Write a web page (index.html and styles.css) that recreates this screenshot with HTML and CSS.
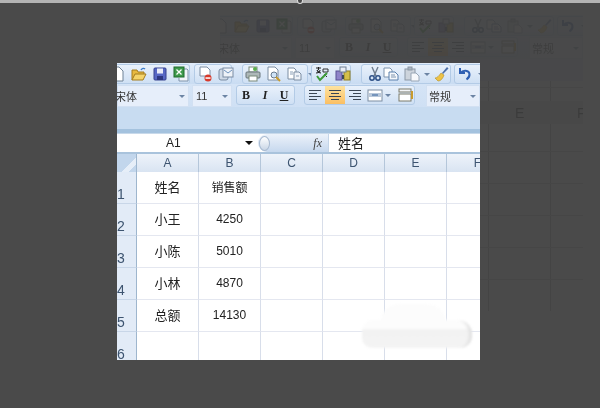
FILE: index.html
```html
<!DOCTYPE html>
<html lang="en">
<head>
    <meta charset="UTF-8">
    <meta name="viewport" content="width=device-width, initial-scale=1.0">
    <title>Sheet</title>
    <link rel="stylesheet" href="styles.css">
</head>
<body>
    <svg class="defs" width="0" height="0">
        <symbol id="i-new" viewBox="0 0 16 16"><path d="M-6 1h14l4 4v10H-6z" fill="#fff" stroke="#6f8296"/></symbol>
        <symbol id="i-open" viewBox="0 0 16 16"><path d="M1 14V4h5l1 2h6v2" fill="#e8b93f" stroke="#a47c1f"/><path d="M1 14l3-6h11l-3 6z" fill="#f5d46a" stroke="#a47c1f"/><path d="M10 4c1-2 3-2 4-1" fill="none" stroke="#3d7cc9" stroke-width="1.4"/></symbol>
        <symbol id="i-save" viewBox="0 0 16 16"><rect x="2" y="2" width="12" height="12" rx="1" fill="#5667c4" stroke="#36428f"/><rect x="5" y="2.500" width="6" height="5" fill="#e9ecf8"/><rect x="5" y="10" width="6" height="4" fill="#2c3780"/></symbol>
        <symbol id="i-xls" viewBox="0 0 16 16"><path d="M8 3h6l1 1v11H6v-3" fill="#f2f5fa" stroke="#7f93ab"/><rect x="1" y="1" width="10" height="10" fill="#3f9a4c" stroke="#1d6b2b"/><path d="M3.500 3.500l5 5m0-5l-5 5" stroke="#fff" stroke-width="1.300"/></symbol>
        <symbol id="i-nosign" viewBox="0 0 16 16"><path d="M3 1h7l3 3v6H3z" fill="#fff" stroke="#7d8ea3"/><circle cx="11" cy="12" r="3.500" fill="#d8392b"/><rect x="8.500" y="11.300" width="5" height="1.500" fill="#fff"/></symbol>
        <symbol id="i-mail" viewBox="0 0 16 16"><rect x="1" y="3" width="9" height="11" rx="2" fill="#cfd9e6" stroke="#7a8ca3"/><rect x="5" y="2" width="10" height="9" fill="#eef2f8" stroke="#7a8ca3"/><path d="M6 4l4 3 4-3" fill="none" stroke="#6f93bd"/></symbol>
        <symbol id="i-print" viewBox="0 0 16 16"><rect x="4" y="1" width="8" height="5" fill="#fff" stroke="#7a8a7a"/><rect x="1" y="6" width="14" height="6" rx="1" fill="#aeb8b8" stroke="#69757a"/><rect x="4" y="10" width="8" height="5" fill="#fff" stroke="#7a8a7a"/><circle cx="10" cy="3" r="2" fill="#5aae4e"/></symbol>
        <symbol id="i-preview" viewBox="0 0 16 16"><path d="M2 1h7l3 3v10H2z" fill="#fff" stroke="#7d8ea3"/><circle cx="8" cy="9" r="3" fill="#cfe3f6" stroke="#66788c"/><path d="M10 11l4 4" stroke="#c79a2d" stroke-width="2"/></symbol>
        <symbol id="i-pages" viewBox="0 0 16 16"><path d="M1 2h6l2 2v9H1z" fill="#fff" stroke="#7d8ea3"/><path d="M7 6h5l2 2v6H7z" fill="#eef2f8" stroke="#7d8ea3"/><path d="M3 6h3M3 8h3M9 10h3" stroke="#8ba0b8"/></symbol>
        <symbol id="i-spell" viewBox="0 0 16 16"><path d="M2 2h5M4.500 1v3M2 7c3 0 4-2 4-3M3 4c1 2 2 3 4 3" fill="none" stroke="#222" stroke-width="1.100"/><path d="M9 3h5v3H9zM10 8l3 3" fill="none" stroke="#333"/><path d="M3 10l3 4 7-7" fill="none" stroke="#3f9c3a" stroke-width="2"/></symbol>
        <symbol id="i-book" viewBox="0 0 16 16"><rect x="1" y="5" width="6" height="9" fill="#8f84c9" stroke="#5b5296"/><rect x="9" y="5" width="6" height="9" fill="#d5c04a" stroke="#8f7f22"/><rect x="5" y="1" width="6" height="5" fill="#e8edf5" stroke="#6f7f93"/><path d="M7 9h2v4H7z" fill="#3f4a5a"/></symbol>
        <symbol id="i-cut" viewBox="0 0 16 16"><path d="M5 1l4 9M11 1L7 10" stroke="#6f7d8e" stroke-width="1.400"/><circle cx="5" cy="12" r="2.200" fill="none" stroke="#2c4f86" stroke-width="1.500"/><circle cx="11" cy="12" r="2.200" fill="none" stroke="#2c4f86" stroke-width="1.500"/></symbol>
        <symbol id="i-copy" viewBox="0 0 16 16"><path d="M1 2h6l2 2v7H1z" fill="#fff" stroke="#7d93ad"/><path d="M6 6h6l3 3v5H6z" fill="#f5f8fc" stroke="#5a80ad"/><path d="M8 9h4M8 11h5" stroke="#7d93ad"/></symbol>
        <symbol id="i-paste" viewBox="0 0 16 16"><rect x="1" y="3" width="10" height="11" fill="#cdd4dc" stroke="#8c98a6"/><rect x="4" y="1" width="4" height="3" fill="#aab4c0" stroke="#8c98a6"/><path d="M7 7h5l3 3v5H7z" fill="#f6f8fb" stroke="#98a6b6"/></symbol>
        <symbol id="i-brush" viewBox="0 0 16 16"><path d="M9 7l5-6 1.500 1.500L10 8z" fill="#4d6fa8"/><path d="M2 12c2 0 4-2 6-5l3 2c-1 3-3 6-6 6z" fill="#eec245" stroke="#b48e22" stroke-width=".6"/></symbol>
        <symbol id="i-undo" viewBox="0 0 16 16"><path d="M3 2v5h5M3.500 7C6 3.500 12 4 12.500 8c.3 2.500-1 4-3 5.500" fill="none" stroke="#2e5fb3" stroke-width="2"/></symbol>
        <symbol id="i-left" viewBox="0 0 16 16"><path d="M2 3.500h12M2 6.500h8M2 9.500h12M2 12.500h8" stroke="#3a4654" stroke-width="1.200"/></symbol>
        <symbol id="i-center" viewBox="0 0 16 16"><path d="M2 3.500h12M4 6.500h8M2 9.500h12M4 12.500h8" stroke="#3a4654" stroke-width="1.200"/></symbol>
        <symbol id="i-right" viewBox="0 0 16 16"><path d="M2 3.500h12M6 6.500h8M2 9.500h12M6 12.500h8" stroke="#3a4654" stroke-width="1.200"/></symbol>
        <symbol id="i-merge" viewBox="0 0 16 16"><rect x="1" y="3" width="14" height="11" fill="#fff" stroke="#7d8ea3"/><rect x="2" y="6" width="12" height="4" fill="#b9c8da"/><path d="M5 8h6" stroke="#33609c"/></symbol>
        <symbol id="i-indent" viewBox="0 0 16 16"><rect x="1" y="2" width="12" height="3" fill="#f2f4f7" stroke="#7a7a6a"/><rect x="1" y="7" width="12" height="7" fill="#fff" stroke="#7a7a6a"/><path d="M14 4v8" stroke="#c79a2d" stroke-width="2"/></symbol>
    </svg>

    <div class="topline"><span class="topdot"></span></div>

    <!-- the dimmed sheet behind the popup -->
    <div class="ghost">
        <div class="bar">
            <div class="tools">
                <div class="group first"><svg class="ico"><use href="#i-new"/></svg><svg class="ico"><use href="#i-open"/></svg><svg class="ico"><use href="#i-save"/></svg><svg class="ico"><use href="#i-xls"/></svg></div>
                <div class="group g2"><svg class="ico"><use href="#i-nosign"/></svg><svg class="ico"><use href="#i-mail"/></svg></div>
                <div class="group g3"><svg class="ico"><use href="#i-print"/></svg><svg class="ico"><use href="#i-preview"/></svg><svg class="ico"><use href="#i-pages"/></svg><i class="arrow"></i></div>
                <div class="group g4"><svg class="ico"><use href="#i-spell"/></svg><svg class="ico"><use href="#i-book"/></svg></div>
                <div class="group g5"><svg class="ico"><use href="#i-cut"/></svg><svg class="ico"><use href="#i-copy"/></svg><svg class="ico"><use href="#i-paste"/></svg><i class="arrow"></i><svg class="ico"><use href="#i-brush"/></svg></div>
                <div class="group g6"><svg class="ico"><use href="#i-undo"/></svg><i class="arrow"></i></div>
            </div>
            <div class="format">
                <div class="combo font"><span>宋体</span><i class="arrow"></i></div>
                <div class="combo size"><span>11</span><i class="arrow"></i></div>
                <div class="group styles"><b class="btn">B</b><b class="btn it">I</b><b class="btn un">U</b></div>
                <div class="group aligns"><svg class="ico"><use href="#i-left"/></svg><span class="sel"><svg class="ico"><use href="#i-center"/></svg></span><svg class="ico"><use href="#i-right"/></svg><svg class="ico"><use href="#i-merge"/></svg><i class="arrow"></i><svg class="ico"><use href="#i-indent"/></svg></div>
                <div class="combo num"><span>常规</span><i class="arrow"></i></div>
            </div>
        </div>
        <div class="ghost-heads"><span>E</span><span>F</span></div>
    </div>

    <div class="window">
        <div class="bar">
            <div class="tools">
                <div class="group first"><svg class="ico"><use href="#i-new"/></svg><svg class="ico"><use href="#i-open"/></svg><svg class="ico"><use href="#i-save"/></svg><svg class="ico"><use href="#i-xls"/></svg></div>
                <div class="group g2"><svg class="ico"><use href="#i-nosign"/></svg><svg class="ico"><use href="#i-mail"/></svg></div>
                <div class="group g3"><svg class="ico"><use href="#i-print"/></svg><svg class="ico"><use href="#i-preview"/></svg><svg class="ico"><use href="#i-pages"/></svg><i class="arrow"></i></div>
                <div class="group g4"><svg class="ico"><use href="#i-spell"/></svg><svg class="ico"><use href="#i-book"/></svg></div>
                <div class="group g5"><svg class="ico"><use href="#i-cut"/></svg><svg class="ico"><use href="#i-copy"/></svg><svg class="ico"><use href="#i-paste"/></svg><i class="arrow"></i><svg class="ico"><use href="#i-brush"/></svg></div>
                <div class="group g6"><svg class="ico"><use href="#i-undo"/></svg><i class="arrow"></i></div>
            </div>
            <div class="format">
                <div class="combo font"><span>宋体</span><i class="arrow"></i></div>
                <div class="combo size"><span>11</span><i class="arrow"></i></div>
                <div class="group styles"><b class="btn">B</b><b class="btn it">I</b><b class="btn un">U</b></div>
                <div class="group aligns"><svg class="ico"><use href="#i-left"/></svg><span class="sel"><svg class="ico"><use href="#i-center"/></svg></span><svg class="ico"><use href="#i-right"/></svg><svg class="ico"><use href="#i-merge"/></svg><i class="arrow"></i><svg class="ico"><use href="#i-indent"/></svg></div>
                <div class="combo num"><span>常规</span><i class="arrow"></i></div>
            </div>
        </div>
        <div class="band"></div>

        <div class="formula">
            <div class="namebox"><span>A1</span><i class="arrow dark"></i></div>
            <div class="fxbox"><span class="knob"></span><em>fx</em></div>
            <div class="fxvalue">姓名</div>
        </div>

        <div class="sheet">
            <div class="corner"></div>
            <div class="head">A</div><div class="head">B</div><div class="head">C</div><div class="head">D</div><div class="head">E</div><div class="head">F</div>

            <div class="rowno">1</div><div class="cell name">姓名</div><div class="cell">销售额</div><div class="cell"></div><div class="cell"></div><div class="cell"></div><div class="cell"></div>
            <div class="rowno">2</div><div class="cell name">小王</div><div class="cell">4250</div><div class="cell"></div><div class="cell"></div><div class="cell"></div><div class="cell"></div>
            <div class="rowno">3</div><div class="cell name">小陈</div><div class="cell">5010</div><div class="cell"></div><div class="cell"></div><div class="cell"></div><div class="cell"></div>
            <div class="rowno">4</div><div class="cell name">小林</div><div class="cell">4870</div><div class="cell"></div><div class="cell"></div><div class="cell"></div><div class="cell"></div>
            <div class="rowno">5</div><div class="cell name">总额</div><div class="cell">14130</div><div class="cell"></div><div class="cell"></div><div class="cell"></div><div class="cell"></div>
            <div class="rowno">6</div><div class="cell"></div><div class="cell"></div><div class="cell"></div><div class="cell"></div><div class="cell"></div><div class="cell"></div>
        </div>

        <div class="smudge"></div>
    </div>
</body>
</html>
```

FILE: styles.css
```css
* {
    box-sizing: border-box;
}
html, body {
    height: 100%;
}
body {
    margin: 0;
    position: relative;
    overflow: hidden;
    background-color: #4a4a4a;
    font-family: "Liberation Sans", "Noto Sans CJK SC", sans-serif;
    font-size: 12px;
    color: #222;
}
.defs {
    position: absolute;
}
.topline {
    height: 3px;
    background-color: #b4b4b4;
    position: relative;
}
.topdot {
    position: absolute;
    left: 297px;
    top: -3px;
    width: 6px;
    height: 7px;
    border: 1px solid #ddd;
    border-radius: 50%;
    background-color: #4a4a4a;
}

/* dimmed copy */
.ghost {
    position: absolute;
    left: 220px;
    top: 15px;
    width: 363px;
    height: 296px;
    overflow: hidden;
    opacity: .2;
    filter: brightness(.3) blur(.6px);
    background:
        repeating-linear-gradient(0deg, transparent 0 31px, #bbb 31px 32px),
        repeating-linear-gradient(90deg, #fff 0 61px, #999 61px 62px) 21px 0;
}
.ghost .bar {
    height: 66px;
}
.ghost-heads {
    display: flex;
    height: 23px;
    padding: 4px 0 0 295px;
    font-size: 14px;
    margin-top: 20px;
    background: #d9dde2;
    color: #000;
}
.ghost-heads span {
    flex: none;
    width: 62px;
}

/* popup */
.window {
    position: relative;
    width: 363px;
    height: 297px;
    margin: 60px 0 0 117px;
    overflow: hidden;
    background-color: #fff;
    filter: blur(.35px);
}
.bar {
    background-color: #d5e4f6;
    overflow: hidden;
}
.tools {
    display: flex;
    height: 21px;
    padding-top: 1px;
    background: linear-gradient(#e1ecfa, #c9dcf2);
}
.format {
    display: flex;
    height: 23px;
    padding-top: 1px;
    background: linear-gradient(#d5e4f6, #cfe0f4);
}
.group {
    display: flex;
    align-items: center;
    height: 20px;
    padding: 0 2px;
    border: 1px solid #b3cbe6;
    border-radius: 3px;
    background: linear-gradient(#e9f1fb, #cfe0f4);
}
.ico {
    width: 16px;
    height: 16px;
    flex: none;
}
.tools .ico {
    margin-right: 5px;
}
.tools .group.first {
    margin-left: -12px;
    width: 85px;
    padding-left: 6px;
    border-left: 0;
}
.first .ico:first-child {
    margin-right: 4px;
}
.g2 {
    margin-left: 4px;
    width: 38px;
}
.g3 {
    margin-left: 10px;
    width: 66px;
}
.g4 {
    margin-left: 3px;
    width: 40px;
}
.g5 {
    margin-left: 10px;
    width: 90px;
    padding-left: 5px;
}
.tools .g5 .ico:first-child {
    margin-right: 0;
}
.g5 .arrow {
    margin: 0 3px 0 -1px;
}
.g6 {
    margin-left: 3px;
    width: 40px;
}
.arrow {
    display: block;
    flex: none;
    width: 0;
    height: 0;
    border: 3px solid transparent;
    border-top: 3px solid #6c84a4;
    border-bottom: 0;
}
.arrow.dark {
    border-width: 4px 4px 0;
    border-top-color: #111;
    border-bottom: 0;
}
.combo {
    display: flex;
    align-items: center;
    justify-content: space-between;
    height: 22px;
    padding: 0 3px 0 3px;
    background-color: #e6eefa;
    border: 1px solid #d2e0f2;
    font-size: 11px;
    color: #333;
}
.combo.font {
    width: 72px;
    margin-right: 3px;
    padding-left: 0;
    font-family: "Noto Sans CJK SC", sans-serif;
}
.combo.font span {
    margin-left: -3px;
}
.combo.size {
    width: 40px;
    margin-right: 4px;
}
.combo.num {
    width: 54px;
    margin-left: 11px;
    padding-left: 2px;
    font-family: "Noto Sans CJK SC", sans-serif;
}
.styles {
    width: 59px;
    padding: 0 1px 0 0;
    justify-content: space-between;
}
.btn {
    font-family: "Liberation Serif", serif;
    font-size: 12px;
    width: 18px;
    text-align: center;
}
.btn.it {
    font-style: italic;
}
.btn.un {
    text-decoration: underline;
}
.aligns {
    width: 111px;
    margin-left: 9px;
    padding-left: 0;
}
.aligns .ico {
    margin: 0 2px;
}
.aligns .sel {
    display: flex;
    width: 20px;
    height: 18px;
    align-items: center;
    background: linear-gradient(#fde3a0, #fbbf63);
}
.aligns .arrow {
    margin: 0 5px 0 0;
}
.band {
    height: 26px;
    background: linear-gradient(#c8dcf1 0 22px, #a4c2de 22px);
}
.formula {
    display: flex;
    height: 21px;
    background-color: #fff;
    border-top: 1px solid #c8d9ea;
    border-bottom: 2px solid #a9c3dc;
}
.namebox {
    display: flex;
    align-items: center;
    width: 141px;
    padding-left: 49px;
    font-size: 12px;
}
.namebox span {
    width: 79px;
}
.fxbox {
    display: flex;
    align-items: center;
    justify-content: space-between;
    width: 70px;
    padding: 0 6px 0 0;
    border-radius: 9px 0 0 9px;
    background: linear-gradient(#ecf2fa, #c6d8ee);
}
.knob {
    width: 11px;
    height: 15px;
    margin-left: 1px;
    border-radius: 50%;
    background: linear-gradient(#fff, #c9d6e6);
    border: 1px solid #a8bad0;
}
.fxbox em {
    font-family: "Liberation Serif", serif;
    font-size: 12px;
    color: #444;
}
.fxvalue {
    padding-left: 9px;
    font-family: "Noto Sans CJK SC", sans-serif;
    font-size: 13px;
    line-height: 18px;
    border-left: 1px solid #c4d5e8;
}
.sheet {
    display: grid;
    grid-template-columns: 20px repeat(6, 62px);
    grid-template-rows: 18px repeat(6, 32px);
    font-family: "Liberation Sans", "Noto Sans CJK SC", sans-serif;
}
.corner {
    background: linear-gradient(135deg, #c2d6ec 60%, #e6eef8 60% 80%, #c2d6ec 80%);
    border-right: 1px solid #9eb6ce;
}
.head {
    display: flex;
    align-items: center;
    justify-content: center;
    background: linear-gradient(#eef3fa, #d9e4f2);
    border-right: 1px solid #b4c6da;
    color: #3d5470;
}
.rowno {
    display: flex;
    align-items: flex-end;
    padding: 0 0 1px 0;
    background-color: #e2ebf7;
    border-right: 1px solid #9eb6ce;
    border-bottom: 1px solid #c8d6e8;
    color: #3d5470;
    font-size: 14px;
}
.cell {
    display: flex;
    align-items: center;
    justify-content: center;
    border-right: 1px solid #d8deea;
    border-bottom: 1px solid #e4e7f0;
    padding-bottom: 2px;
}
.cell.name {
    font-size: 13px;
}

/* smudged out watermark */
.smudge {
    position: absolute;
    left: 245px;
    top: 257px;
    width: 110px;
    height: 28px;
    border-radius: 10px 14px 12px 10px;
    background: linear-gradient(#fcfcfc 30%, #f2f2f2 35%, #f4f4f4);
    box-shadow: inset -6px 0 3px -3px #e0e0e0;
    filter: blur(1px);
}
.smudge::before {
    content: "";
    position: absolute;
    left: 18px;
    top: -16px;
    width: 66px;
    height: 20px;
    border-radius: 30px 30px 0 0;
    background-color: #fcfcfc;
}
```
